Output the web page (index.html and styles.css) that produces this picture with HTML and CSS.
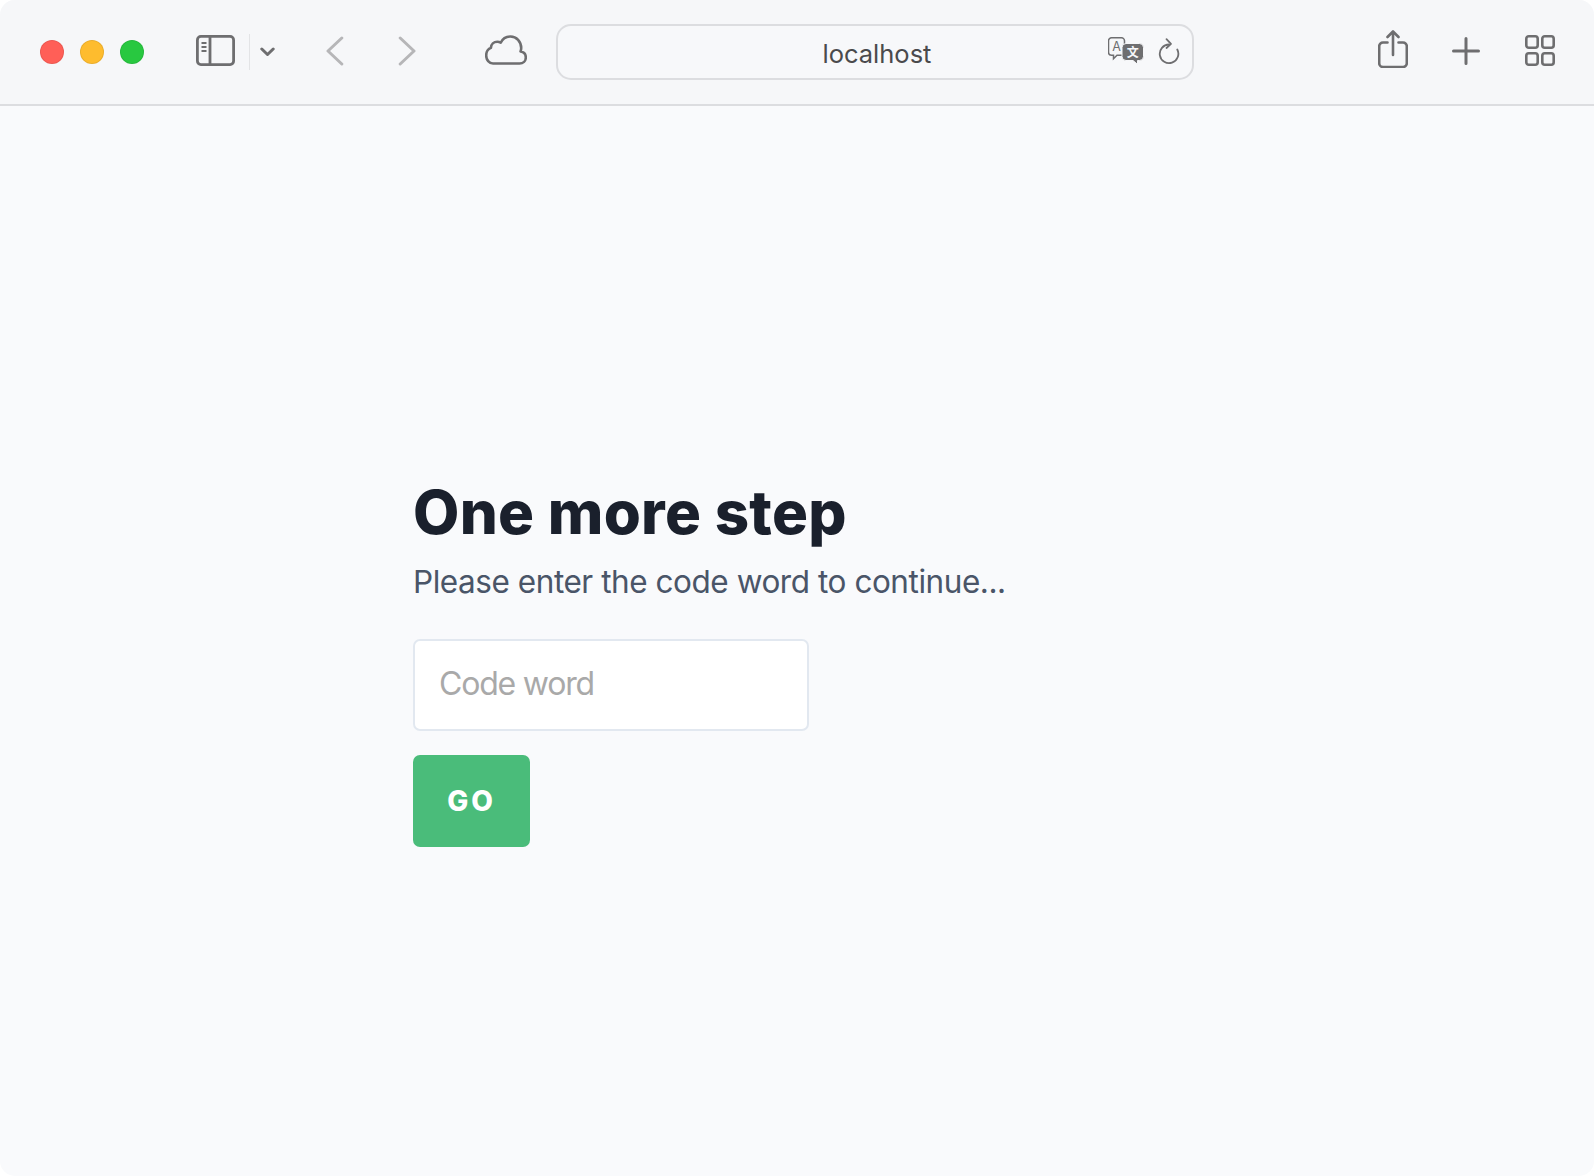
FILE: index.html
```html
<!DOCTYPE html>
<html lang="en">
<head>
<meta charset="utf-8">
<title>One more step</title>
<link rel="stylesheet" href="styles.css">
</head>
<body>
<div class="window">
  <header class="toolbar">
    <div class="lights">
      <span class="light light-red"></span>
      <span class="light light-yellow"></span>
      <span class="light light-green"></span>
    </div>
    <svg class="icon sidebar-icon" width="39" height="31" viewBox="0 0 39 31" fill="none" stroke="#6e6e70" stroke-width="2.8"><rect x="1.400" y="1.400" width="36.200" height="28.200" rx="3.500"/><path d="M14 1.400v28.200"/><path d="M5.500 8h5M5.500 12h5M5.500 16h5" stroke-width="2"/></svg>
    <span class="divider"></span>
    <svg class="icon chevron-icon" width="15" height="10" viewBox="0 0 15 10" fill="none" stroke="#6e6e70" stroke-width="3" stroke-linecap="round" stroke-linejoin="round"><path d="M1.800 2l5.700 5.500L13.200 2"/></svg>
    <svg class="icon back-icon" width="18" height="30" viewBox="0 0 18 30" fill="none" stroke="#b6b6b8" stroke-width="3" stroke-linecap="round" stroke-linejoin="round"><path d="M15.800 2L2 15l13.800 13"/></svg>
    <svg class="icon forward-icon" width="18" height="30" viewBox="0 0 18 30" fill="none" stroke="#b6b6b8" stroke-width="3" stroke-linecap="round" stroke-linejoin="round"><path d="M2.200 2L16 15 2.200 28"/></svg>
    <svg class="icon cloud-icon" width="42" height="30" viewBox="0 0 42 30" fill="none" stroke="#6e6e70" stroke-width="2.600" stroke-linejoin="round"><path d="M8 28.500h26.500c3.600 0 6.300-2.600 6.300-6 0-3.200-2.200-5.600-5.300-6 .5-1 .7-2.200.7-3.400C36.200 6.500 31.500 1.500 25.500 1.500c-4.400 0-8 2.400-9.800 6.200-1-.7-2.200-1-3.400-1-3.500 0-6.200 2.600-6.400 6.200C2.900 14 1.200 17 1.200 20.500c0 4.500 3 8 6.800 8z"/></svg>
    <div class="address">
      <span class="address-text">localhost</span>
      <svg class="translate-icon" width="36" height="28" viewBox="0 0 36 28"><path d="M3.500 .8h10a3 3 0 0 1 3 3v11.500a3 3 0 0 1-3 3H9l-3.500 3.500v-3.500h-2a3 3 0 0 1-3-3V3.800a3 3 0 0 1 3-3z" fill="#f6f7f9" stroke="#6e6e70" stroke-width="1.500"/><text class="translate-a" x="8.500" y="13.500">A</text><path d="M18 6.500h13.500a4 4 0 0 1 4 4v9a4 4 0 0 1-4 4h-2v3.800L25 23.500h-7a4 4 0 0 1-4-4v-9a4 4 0 0 1 4-4z" fill="#6e6e70" stroke="#f6f7f9" stroke-width="1"/><text class="translate-b" x="24.700" y="19.500">文</text></svg>
      <svg class="reload-icon" width="22" height="28" viewBox="0 0 22 28" fill="none" stroke="#6e6e70" stroke-width="1.800" stroke-linecap="round" stroke-linejoin="round"><path d="M11 7.500a9.300 9.300 0 1 0 8.300 5"/><path d="M8.500 2.200L13 6.800 8.500 11"/></svg>
    </div>
    <svg class="icon share-icon" width="30" height="38" viewBox="0 0 30 38" fill="none" stroke="#6e6e70" stroke-width="2.600" stroke-linecap="round" stroke-linejoin="round"><path d="M9.500 12.500H5a3.800 3.800 0 0 0-3.800 3.800v16.900A3.800 3.800 0 0 0 5 37h20a3.800 3.800 0 0 0 3.800-3.800V16.300A3.800 3.800 0 0 0 25 12.500h-4.500"/><path d="M15 25V2M9.500 7L15 1.500 20.500 7"/></svg>
    <svg class="icon plus-icon" width="28" height="28" viewBox="0 0 28 28" fill="none" stroke="#6e6e70" stroke-width="3" stroke-linecap="round"><path d="M14 1.500v25M1.500 14h25"/></svg>
    <svg class="icon grid-icon" width="30" height="31" viewBox="0 0 30 31" fill="none" stroke="#6e6e70" stroke-width="2.600"><rect x="1.300" y="1.300" width="11.400" height="11.400" rx="2.500"/><rect x="17.300" y="1.300" width="11.400" height="11.400" rx="2.500"/><rect x="1.300" y="18.300" width="11.400" height="11.400" rx="2.500"/><rect x="17.300" y="18.300" width="11.400" height="11.400" rx="2.500"/></svg>
  </header>
  <main class="content">
    <h1 class="title">One more step</h1>
    <p class="subtitle">Please enter the code word to continue...</p>
    <form class="code-form">
      <input class="code-input" type="text" placeholder="Code word">
      <button class="go-button" type="button">GO</button>
    </form>
  </main>
</div>
</body>
</html>
```
FILE: styles.css
```css
* { box-sizing: border-box; }
html, body { margin: 0; height: 100%; background: #fff; }
body { font-family: Inter, "Noto Sans CJK SC", sans-serif; overflow: hidden; }
.window {
  height: 1176px;
  display: flex;
  flex-direction: column;
  border-radius: 15px;
  overflow: hidden;
  background: #f9fafc;
}
.toolbar {
  height: 106px;
  flex: none;
  display: flex;
  align-items: flex-start;
  background: #f6f7f9;
  border-bottom: 2px solid #dcdde0;
  padding-left: 40px;
}
.icon { flex: none; display: block; }
.lights { display: flex; gap: 16px; margin-top: 40px; }
.light { width: 24px; height: 24px; border-radius: 50%; border: 1px solid rgba(0,0,0,.08); }
.light-red { background: #ff5f57; }
.light-yellow { background: #febc2e; }
.light-green { background: #28c840; }
.sidebar-icon { margin: 35px 0 0 52px; }
.divider { width: 1px; height: 36px; margin: 34px 0 0 14px; background: #e3e4e6; flex: none; }
.chevron-icon { margin: 47px 0 0 10px; }
.back-icon { margin: 36px 0 0 51px; }
.forward-icon { margin: 36px 0 0 54px; }
.cloud-icon { margin: 35px 0 0 69px; }
.address {
  width: 638px;
  height: 56px;
  margin: 24px 0 0 29px;
  flex: none;
  position: relative;
  display: flex;
  align-items: center;
  justify-content: center;
  border: 2px solid #dcdde0;
  border-radius: 15px;
  background: #f7f8fa;
}
.address-text { font-size: 25.5px; color: #4a4a4c; margin: 3px 0 0 4px; }
.translate-icon { position: absolute; left: 550px; top: 11px; }
.translate-a { font: 12.500px Inter, sans-serif; fill: #6e6e70; text-anchor: middle; }
.translate-b { font: 700 12px "Noto Sans CJK SC", sans-serif; fill: #f6f7f9; text-anchor: middle; }
.reload-icon { position: absolute; left: 600px; top: 11px; }
.share-icon { margin: 30px 0 0 184px; }
.plus-icon { margin: 37px 0 0 44px; }
.grid-icon { margin: 35px 0 0 45px; }
.content { flex: 1; padding: 376px 0 0 413px; }
.title { margin: 0; font-size: 60px; line-height: 1; font-weight: 800; color: #1a202c; letter-spacing: 0.28px; }
.subtitle { margin: 21px 0 0; font-size: 31.5px; line-height: 38px; color: #4a5568; letter-spacing: -0.45px; }
.code-form { display: flex; flex-direction: column; align-items: flex-start; gap: 24px; margin: 38px 0 0; }
.code-input {
  width: 396px;
  height: 92px;
  padding: 0 24px 4px;
  border: 2px solid #e2e8f0;
  border-radius: 7px;
  background: #fff;
  font: 32px Inter, sans-serif;
  letter-spacing: -1.2px;
  color: #1a202c;
  outline: none;
}
.code-input::placeholder { color: #a9a9a9; opacity: 1; }
.go-button {
  width: 117px;
  height: 92px;
  border: 0;
  border-radius: 7px;
  background: #4abc7a;
  color: #fff;
  font: 800 28px Inter, sans-serif;
  letter-spacing: 3px;
}
```
